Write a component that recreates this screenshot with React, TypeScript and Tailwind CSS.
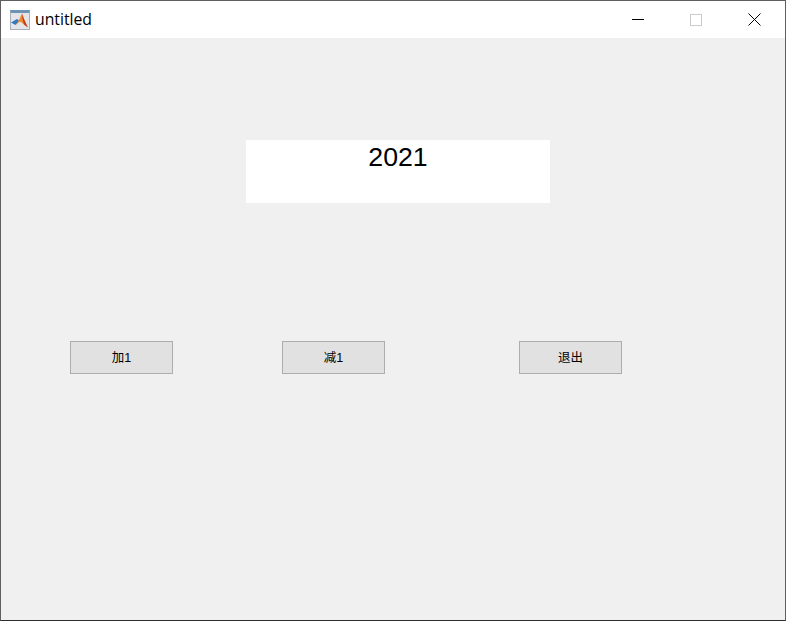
export default function App() {
  return (
    <div className="w-[786px] h-[621px] flex flex-col bg-[#f0f0f0] border border-[#5f5f5f] border-b-[#2e2e2e] overflow-hidden font-['Liberation_Sans',sans-serif]">
      {/* Title bar */}
      <div className="h-[37px] shrink-0 bg-white flex items-center">
        <div className="ml-[9px] w-[20px] h-[20px] bg-[#e3e5e8] border border-[#a9aeb5] border-t-[3px] border-t-[#6f93b5] flex items-center justify-center">
          <svg width="18" height="15" viewBox="0 0 18 15">
            <path d="M0 9.5 L6 6 L8.5 8 L4.5 12 Z" fill="#2f78c4" />
            <path d="M4.5 12 L8 7 L11 0.5 L13 6 L16 14 L12.5 11 L9 8.5 Z" fill="#f0882e" />
            <path d="M11 0.5 L13 6 L17 14.5 L13 11.5 L11.5 6 Z" fill="#c4401c" />
          </svg>
        </div>
        <span className="ml-[5px] text-[15.75px] leading-none text-black font-['Open_Sans',sans-serif]">untitled</span>
        <div className="ml-auto mr-[2px] flex items-center">
          <div className="w-[58px] h-[37px] flex items-center justify-center">
            <svg width="12" height="12" viewBox="0 0 12 12">
              <path d="M0 5.5 H12" stroke="#000" strokeWidth="1" />
            </svg>
          </div>
          <div className="w-[58px] h-[37px] flex items-center justify-center">
            <svg width="12" height="12" viewBox="0 0 12 12">
              <rect x="0.5" y="0.5" width="11" height="11" fill="none" stroke="#cccccc" strokeWidth="1" />
            </svg>
          </div>
          <div className="w-[58px] h-[37px] flex items-center justify-center">
            <svg width="13" height="13" viewBox="0 0 13 13">
              <path d="M0.5 0.5 L12.5 12.5 M12.5 0.5 L0.5 12.5" stroke="#000" strokeWidth="1" />
            </svg>
          </div>
        </div>
      </div>

      {/* Figure body */}
      <div className="flex-1 bg-[#f0f0f0]">
        <div className="mt-[102px] ml-[245px] w-[304px] h-[63px] bg-white text-center text-[26.67px] leading-[35px] text-black">
          2021
        </div>
        <div className="mt-[138px] ml-[69px] flex text-[12.5px] text-black font-['Liberation_Sans','Noto_Sans_CJK_SC',sans-serif]">
          <button className="w-[103px] h-[33px] pt-px bg-[#e1e1e1] border border-[#adadad]">加1</button>
          <button className="ml-[109px] w-[103px] h-[33px] pt-px bg-[#e1e1e1] border border-[#adadad]">减1</button>
          <button className="ml-[134px] w-[103px] h-[33px] pt-px bg-[#e1e1e1] border border-[#adadad]">退出</button>
        </div>
      </div>
    </div>
  );
}
